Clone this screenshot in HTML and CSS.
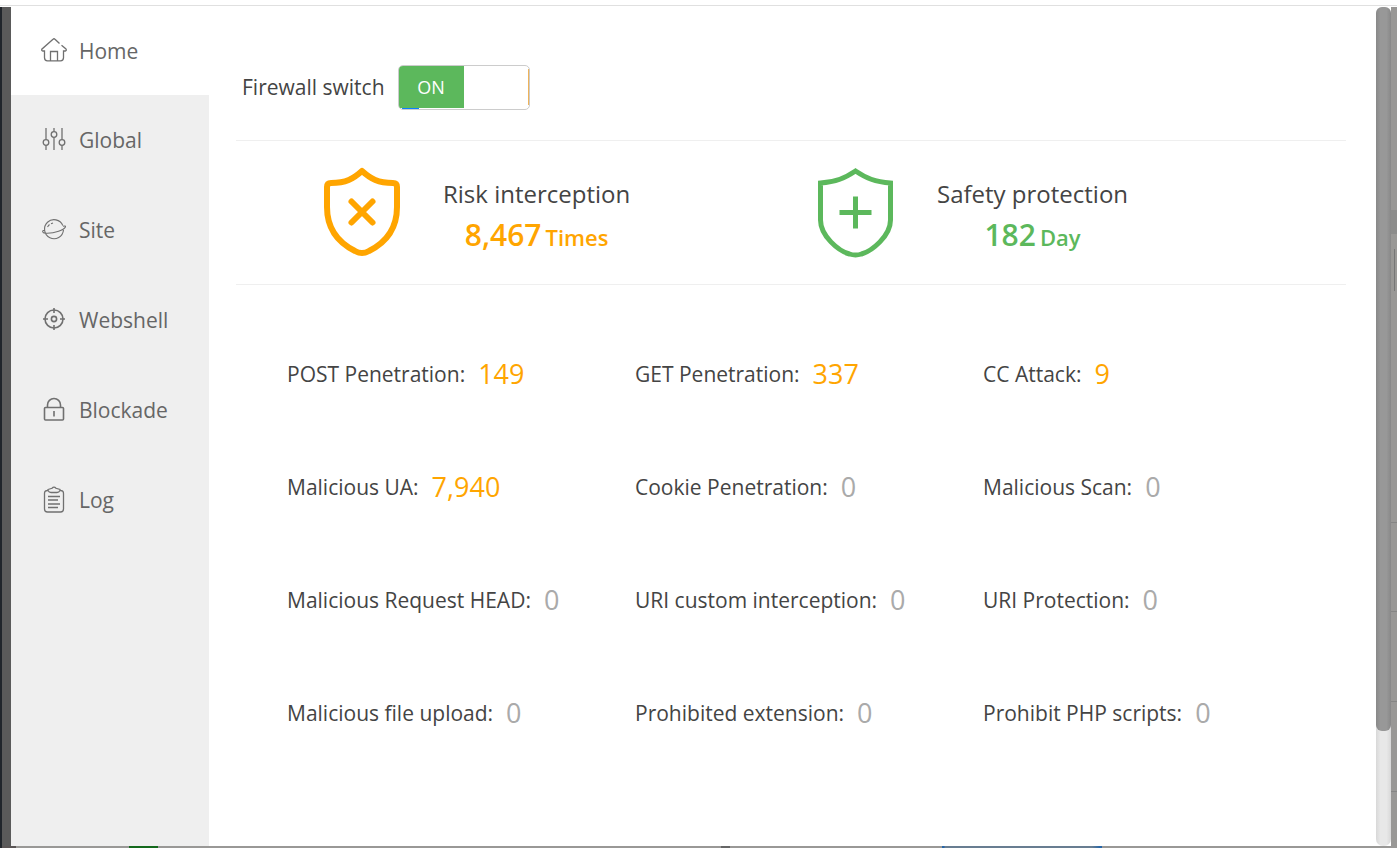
FILE: index.html
```html
<!DOCTYPE html>
<html lang="en">
<head>
<meta charset="utf-8">
<meta name="viewport" content="width=device-width, initial-scale=1">
<title>Firewall</title>
<link rel="stylesheet" href="styles.css">
</head>
<body>
<div class="topline"></div>
<div class="window">
  <div class="edge-left"></div>
  <nav class="sidebar">
    <a class="nav-item active" href="#home"><svg class="nav-icon" viewBox="0 0 28 28"><path d="M19.500 7.500 15 3.200q-1-1-2 0L1.800 13.200q-.5 1.600 1 1.800h1.700v6.800q0 3 3 3h13q3 0 3-3V15h2q1.400-.6.500-2L21.500 9.300M10.500 24.500V15.500h7v9"/></svg>Home</a>
    <a class="nav-item" href="#global"><svg class="nav-icon" viewBox="0 0 28 28"><path d="M6 3v11.500M6 20.500V25M14 3v3.500M14 12.500V25M22 3v11.500M22 20.500V25"/><circle cx="6" cy="17.500" r="2.800"/><circle cx="14" cy="9.500" r="2.800"/><circle cx="22" cy="17.500" r="2.800"/></svg>Global</a>
    <a class="nav-item" href="#site"><svg class="nav-icon thin" viewBox="0 0 28 28"><path d="M22.800 10.500A9.500 9.500 0 1 0 23.500 15M23 11.300q3-1 2.400.8C24 15 15 18.500 6 18.200c-3.500 0-4.500-2.500-1.800-2.900M7.500 12q1-1.500 2-2.500M11 8.700l2-.7"/></svg>Site</a>
    <a class="nav-item" href="#webshell"><svg class="nav-icon bold" viewBox="0 0 28 28"><circle cx="14" cy="14" r="9"/><circle cx="14" cy="14" r="2.600"/><path d="M14 3v5M14 20v5M3 14h5M20 14h5"/></svg>Webshell</a>
    <a class="nav-item" href="#blockade"><svg class="nav-icon bold" viewBox="0 0 28 28"><rect x="4.500" y="12.500" width="19" height="12.500" rx="1"/><path d="M7.500 12.500V10a6.500 6.500 0 0 1 13 0V12.500M14 16v5.500"/></svg>Blockade</a>
    <a class="nav-item" href="#log"><svg class="nav-icon" viewBox="0 0 28 28"><path d="M8.500 5.500H7.500q-3 0-3 3V24q0 3 3 3h13q3 0 3-3V8.500q0-3-3-3h-1M8 4.500l4-1.200q2-2.300 4 0l4 1.200v1q-1 2-3 2h-6q-2 0-3-2zM8 11.500h12M8 15h10M8 19h12M8 22.500h10"/></svg>Log</a>
  </nav>
  <main class="content">
    <div class="switch-row">
      <label for="firewall">Firewall switch</label>
      <span class="switch"><input type="checkbox" id="firewall" checked><span class="switch-on" aria-hidden="true">ON</span></span>
    </div>
    <section class="summary">
      <div class="metric risk">
        <svg class="shield" viewBox="0 0 78 92"><path stroke-linejoin="round" d="M39 4C30 12 23 16 8 16q-4 0-4 4v20c0 22 12 36 28 44q7 4 14 0C62 76 74 62 74 40V20q0-4-4-4C55 16 48 12 39 4z"/><path stroke-linecap="round" d="m28.500 34.500 21 21m0-21-21 21"/></svg>
        <div class="metric-text"><div class="metric-title">Risk interception</div><div class="metric-value"><span>8,467</span><small>Times</small></div></div>
      </div>
      <div class="metric safe">
        <svg class="shield" viewBox="0 0 78 92"><path d="M38.500 4C28 11 19 15 3.500 16v37c0 16 18 31 29 34q6 2 12 0C55 84 73.500 69 73.500 53V16C58 15 49 11 38.500 4z"/><path d="M38.500 29.500v32m-16-16h32"/></svg>
        <div class="metric-text"><div class="metric-title">Safety protection</div><div class="metric-value"><span>182</span><small>Day</small></div></div>
      </div>
    </section>
    <ul class="stats">
      <li>POST Penetration: <b class="hit">149</b></li>
      <li>GET Penetration: <b class="hit">337</b></li>
      <li>CC Attack: <b class="hit">9</b></li>
      <li>Malicious UA: <b class="hit">7,940</b></li>
      <li>Cookie Penetration: <b>0</b></li>
      <li>Malicious Scan: <b>0</b></li>
      <li>Malicious Request HEAD: <b>0</b></li>
      <li>URI custom interception: <b>0</b></li>
      <li>URI Protection: <b>0</b></li>
      <li>Malicious file upload: <b>0</b></li>
      <li>Prohibited extension: <b>0</b></li>
      <li>Prohibit PHP scripts: <b>0</b></li>
    </ul>
  </main>
  <div class="track"><div class="thumb"></div></div>
  <div class="edge-right"></div>
</div>
<div class="edge-bottom"></div>
</body>
</html>
```
FILE: styles.css
```css
* { box-sizing: border-box; }
body {
  margin: 0;
  min-height: 100vh;
  display: flex;
  flex-direction: column;
  background: #fff;
  color: #444;
  font: 21px/30px "Segoe UI", "Open Sans", sans-serif;
}
.topline { height: 6px; border-bottom: 1px solid #e0e0e0; }
.window { flex: 1; display: flex; }
.edge-left {
  width: 11px;
  margin-top: 1px;
  border-left: 2px solid #20252b;
  background: #5a5a5a;
}
.sidebar { width: 198px; background: #efefef; }
.nav-item {
  display: flex;
  align-items: center;
  gap: 11px;
  height: 90px;
  padding-left: 29px;
  color: #666;
  text-decoration: none;
}
.nav-item.active { background: #fff; height: 89px; }
.nav-icon {
  width: 28px;
  height: 28px;
  margin-bottom: 2px;
  fill: none;
  stroke: #707070;
  stroke-width: 1.3;
}
.nav-icon.thin { stroke-width: 1.1; }
.nav-icon.bold { stroke-width: 1.6; }
.content { flex: 1; padding: 60px 30px 0 27px; }
.switch-row {
  display: flex;
  align-items: center;
  gap: 13px;
  height: 74px;
  padding: 0 0 32px 6px;
}
.switch {
  position: relative;
  width: 132px;
  height: 45px;
  overflow: hidden;
  border: 1px solid #ccc;
  border-radius: 5px;
  background: linear-gradient(#0a80ff, #0a80ff) 3px 100% / 17px 1px no-repeat,
    linear-gradient(#eeb35a, #eeb35a) 100% 3px / 1px 36px no-repeat, #fff;
}
.switch input {
  position: absolute;
  inset: 0;
  width: 100%;
  height: 100%;
  margin: 0;
  opacity: 0;
  cursor: pointer;
}
.switch-on {
  display: block;
  width: 65px;
  height: 42px;
  background: #5cb85c;
  color: #fff;
  font-size: 18px;
  line-height: 42px;
  text-align: center;
}
.switch input:not(:checked) + .switch-on { visibility: hidden; }
.summary {
  display: grid;
  grid-template-columns: 1fr 1fr;
  height: 145px;
  padding: 0 35px 0 87px;
  border-top: 1px solid #efefef;
  border-bottom: 1px solid #efefef;
}
.metric { display: flex; align-items: center; gap: 42px; }
.shield { width: 78px; height: 92px; fill: none; stroke-width: 6; }
.risk { color: #ffa500; }
.safe { color: #5cb85c; }
.risk .shield { stroke: #ffa500; }
.safe .shield { stroke: #5cb85c; stroke-width: 5; }
.metric-text { padding-top: 6px; }
.metric-title { color: #444; font-size: 24px; line-height: 40px; }
.metric-value {
  display: flex;
  align-items: baseline;
  justify-content: center;
  gap: 4px;
  font-size: 30px;
  font-weight: 600;
  line-height: 42px;
}
.metric-value small { font-size: 22px; }
.stats {
  display: grid;
  grid-template-columns: repeat(3, 1fr);
  grid-auto-rows: 113px;
  margin: 32px 0;
  padding: 0 15px 0 51px;
  list-style: none;
}
.stats li { display: flex; align-items: center; gap: 13px; white-space: nowrap; }
.stats b { color: #aaa; font-size: 27px; font-weight: 400; }
.stats .hit { color: #ffa500; }
.track {
  width: 15px;
  margin-top: 1px;
  border-radius: 7px;
  background: linear-gradient(90deg, #d8d8d8, #e8e8e8 30%, #e8e8e8 70%, #d8d8d8);
}
.thumb {
  height: 86.3%;
  border-radius: 6px;
  background: linear-gradient(90deg, #888, #989898 30%, #989898 70%, #888);
}
.edge-right {
  width: 6px;
  margin-top: 1px;
  background: linear-gradient(#8c8c8b, #8c8c8b) 0 203px / 6px 24px no-repeat,
    linear-gradient(#858584, #858584) 0 515px / 6px 1px no-repeat,
    linear-gradient(#858584, #858584) 0 604px / 6px 1px no-repeat,
    linear-gradient(#858584, #858584) 0 694px / 6px 1px no-repeat,
    linear-gradient(#858584, #858584) 0 784px / 6px 1px no-repeat,
    linear-gradient(#777, #777) 3px 242px / 1px 42px no-repeat, #999896;
}
.edge-bottom {
  height: 2px;
  background: linear-gradient(#23282d, #23282d) 0 0 / 2px 2px no-repeat,
    linear-gradient(#5a5555, #5a5555) 2px 0 / 14px 2px no-repeat,
    linear-gradient(#14691c, #14691c) 129px 0 / 29px 2px no-repeat,
    linear-gradient(#666, #666) 721px 0 / 9px 2px no-repeat,
    linear-gradient(90deg, #2766a8 2px, #687d91 3px 150px, #2766a8 158px) 942px 0 / 160px 2px no-repeat, #999896;
}
```
